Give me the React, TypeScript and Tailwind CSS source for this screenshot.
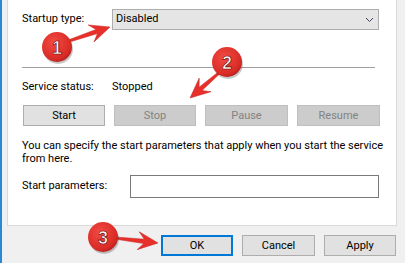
import React from "react";

function Btn({ label, disabled, w, primary }: { label: string; disabled?: boolean; w: string; primary?: boolean }) {
  const base = "h-[21px] flex items-center justify-center text-[11px] leading-none";
  let cls = "";
  if (disabled) cls = "bg-[#cccccc] border border-[#bfbfbf] text-[#838383]";
  else if (primary) cls = "bg-[#e1e1e1] border-2 border-[#0078d7] text-black";
  else cls = "bg-[#e1e1e1] border border-[#adadad] text-black";
  return <div className={`${base} ${cls} ${w}`}>{label}</div>;
}

function Badge({ cx, cy, n }: { cx: number; cy: number; n: string }) {
  return (
    <g>
      <circle cx={cx + 1} cy={cy + 2} r={15} fill="rgba(0,0,0,0.22)" />
      <circle cx={cx} cy={cy} r={15} fill="url(#rg)" />
      <text x={cx} y={cy + 6.5} textAnchor="middle" fontFamily="'Liberation Sans', Arial, sans-serif" fontWeight="bold" fontSize="18" fill="#fff" stroke="#6a0a0a" strokeWidth="0.7">{n}</text>
    </g>
  );
}

function Arrow({ x1, y1, x2, y2 }: { x1: number; y1: number; x2: number; y2: number }) {
  const dx = x2 - x1, dy = y2 - y1;
  const len = Math.hypot(dx, dy);
  const ux = dx / len, uy = dy / len;
  const px = -uy, py = ux;
  const head = 20, hw = 9, sw = 2.2;
  const bx = x2 - ux * head, by = y2 - uy * head;
  const nx = x2 - ux * (head - 6), ny = y2 - uy * (head - 6);
  const pts = [
    [x1 + px * sw * 0.5, y1 + py * sw * 0.5],
    [nx + px * sw, ny + py * sw],
    [bx + px * hw, by + py * hw],
    [x2, y2],
    [bx - px * hw, by - py * hw],
    [nx - px * sw, ny - py * sw],
    [x1 - px * sw * 0.5, y1 - py * sw * 0.5],
  ].map((p) => p.join(",")).join(" ");
  return <polygon points={pts} fill="#e8302b" stroke="#c41f1a" strokeWidth="0.5" />;
}

export default function App() {
  const font = { fontFamily: "Roboto, 'Liberation Sans', Arial, sans-serif" };
  return (
    <div className="relative w-[405px] h-[263px] overflow-hidden bg-[#f0f0f0] flex text-black" style={font}>
      <div className="w-[2px] h-full bg-[#2b88d8]" />
      <div className="flex flex-col pl-[5px]">
        <div className="w-[390px] h-[226px] bg-white border-l border-r border-b border-[#d9d9d9] flex flex-col pl-[14px] text-[11px]">
          <div className="flex items-center mt-[9px] h-[21px]">
            <div className="w-[90px]">Startup type:</div>
            <div className="w-[267px] h-[21px] bg-[#e5e5e5] border border-[#adadad] flex items-center pl-[3px] pr-[4px] justify-between">
              <span>Disabled</span>
              <svg width="9" height="6" viewBox="0 0 9 6"><path d="M1 1 L4.5 4.5 L8 1" fill="none" stroke="#404060" strokeWidth="1" /></svg>
            </div>
          </div>
          <div className="mt-[37px] w-[353px] h-px bg-[#a0a0a0]" />
          <div className="flex items-center mt-[12px] h-[14px]">
            <div className="w-[90px]">Service status:</div>
            <div>Stopped</div>
          </div>
          <div className="flex mt-[11px] gap-[9px] pl-px">
            <Btn label="Start" w="w-[82px]" />
            <Btn label="Stop" w="w-[82px]" disabled />
            <Btn label="Pause" w="w-[83px]" disabled />
            <Btn label="Resume" w="w-[83px]" disabled />
          </div>
          <div className="mt-[14px] leading-[12.5px] whitespace-nowrap">
            <div>You can specify the start parameters that apply when you start the service</div>
            <div>from here.</div>
          </div>
          <div className="flex items-center mt-[10px] h-[23px]">
            <div className="w-[108px]">Start parameters:</div>
            <div className="w-[249px] h-[23px] border border-[#7a7a7a] bg-white" />
          </div>
        </div>
        <div className="flex justify-end gap-[9px] mt-[9px] pr-px">
          <Btn label="OK" w="w-[72px]" primary />
          <Btn label="Cancel" w="w-[73px]" />
          <Btn label="Apply" w="w-[72px]" />
        </div>
      </div>
      <svg className="absolute left-0 top-0" width="405" height="263" viewBox="0 0 405 263">
        <defs>
          <radialGradient id="rg" cx="0.4" cy="0.35" r="0.7">
            <stop offset="0" stopColor="#f24a43" />
            <stop offset="0.8" stopColor="#d92b26" />
            <stop offset="1" stopColor="#b01e1a" />
          </radialGradient>
        </defs>
        <Arrow x1={66} y1={42} x2={110} y2={27} />
        <Arrow x1={220} y1={72} x2={190} y2={98} />
        <Arrow x1={115} y1={238} x2={158} y2={243} />
        <Badge cx={57} cy={47} n="1" />
        <Badge cx={227} cy={62} n="2" />
        <Badge cx={103} cy={237} n="3" />
      </svg>
    </div>
  );
}
